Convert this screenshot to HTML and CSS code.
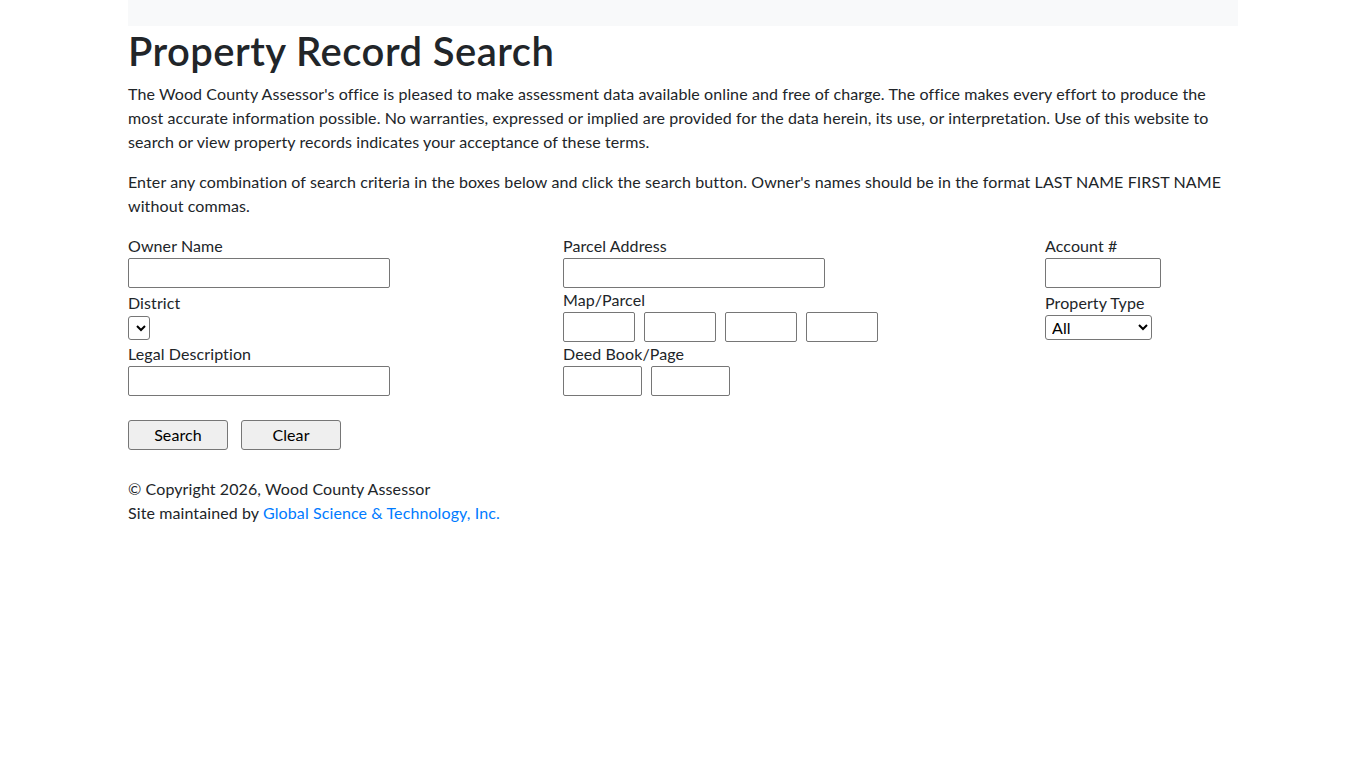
FILE: index.html
```html
<!DOCTYPE html>
<html lang="en">
<head>
  <meta charset="UTF-8" />
  <meta name="viewport" content="width=device-width, initial-scale=1.0"/>
  <title>Property Record Search</title>
  <link rel="stylesheet" href="styles.css">
</head>
<body>

  <div class="container">
    <div class="top-bar"></div>

    <h1>Property Record Search</h1>
    <p>The Wood County Assessor's office is pleased to make assessment data available online and free of charge. The office makes every effort to produce the most accurate information possible. No warranties, expressed or implied are provided for the data herein, its use, or interpretation. Use of this website to search or view property records indicates your acceptance of these terms.</p>
    <p>Enter any combination of search criteria in the boxes below and click the search button. Owner's names should be in the format LAST NAME FIRST NAME without commas.</p>

    <form class="search-form">
      <div class="fields">
        <div class="col col-left">
          <label for="owner">Owner Name</label>
          <input type="text" id="owner" class="input-wide">
          <label for="district" class="gap-top">District</label>
          <select id="district" class="select-empty"></select>
          <label for="legal" class="gap-small">Legal Description</label>
          <input type="text" id="legal" class="input-wide">
        </div>

        <div class="col col-mid">
          <label for="address">Parcel Address</label>
          <input type="text" id="address" class="input-wide">
          <label>Map/Parcel</label>
          <div class="input-row">
            <input type="text" class="input-map">
            <input type="text" class="input-map">
            <input type="text" class="input-map">
            <input type="text" class="input-map">
          </div>
          <label>Deed Book/Page</label>
          <div class="input-row">
            <input type="text" class="input-deed">
            <input type="text" class="input-deed">
          </div>
        </div>

        <div class="col col-right">
          <label for="account">Account #</label>
          <input type="text" id="account" class="input-account">
          <label for="ptype" class="gap-top">Property Type</label>
          <select id="ptype" class="select-type">
            <option>All</option>
            <option>Real</option>
            <option>Personal</option>
          </select>
        </div>
      </div>

      <div class="buttons">
        <button type="button">Search</button>
        <button type="reset">Clear</button>
      </div>
    </form>

    <footer>
      <div>&copy; Copyright 2026, Wood County Assessor</div>
      <div>Site maintained by <a href="#">Global Science &amp; Technology, Inc.</a></div>
    </footer>
  </div>

</body>
</html>
```

FILE: styles.css
```css
body {
  margin: 0;
  font-family: "Segoe UI", Lato, "Noto Sans", sans-serif;
  font-size: 16px;
  line-height: 24px;
  letter-spacing: 0.1px;
  color: #212529;
  background: #fff;
}
.container {
  width: 1110px;
  margin: 0 auto;
}
.top-bar {
  height: 26px;
  background-color: #f8f9fa;
}
h1 {
  font-size: 40px;
  font-weight: 600;
  line-height: 50px;
  letter-spacing: 0.45px;
  margin: 0 0 6px;
}
p {
  margin: 0 0 16px;
}
.search-form {
  margin: 0;
}
.fields {
  display: grid;
  grid-template-columns: 435px 482px 1fr;
}
.col {
  display: flex;
  flex-direction: column;
  align-items: flex-start;
}
label {
  display: block;
}
.gap-top {
  margin-top: 3px;
}
.gap-small {
  margin-top: 2px;
}
input, select, button {
  font-family: inherit;
  font-size: 16px;
  line-height: 24px;
  letter-spacing: 0.1px;
  box-sizing: border-box;
  margin: 0;
  color: #000;
}
input {
  height: 30px;
  padding: 1px 2px;
  border: 1px solid #767676;
  border-radius: 2px;
  background: #fff;
}
.input-wide {
  width: 262px;
}
.input-account {
  width: 116px;
}
.input-row {
  display: flex;
  gap: 9px;
}
.input-map {
  width: 72px;
}
.input-deed {
  width: 79px;
}
select {
  height: 25px;
  border: 1px solid #767676;
  border-radius: 3px;
  background: #fff;
  padding: 0 0 0 2px;
  line-height: normal;
}
.select-empty {
  width: 22px;
  height: 24px;
  margin-top: 1px;
}
.select-type {
  width: 107px;
}
.buttons {
  display: flex;
  gap: 13px;
  margin-top: 24px;
}
button {
  width: 100px;
  height: 30px;
  background: #efefef;
  border: 1px solid #767676;
  border-radius: 3px;
  color: #000;
  padding: 0;
}
footer {
  margin-top: 27px;
}
a {
  color: #007bff;
  text-decoration: none;
}
```
